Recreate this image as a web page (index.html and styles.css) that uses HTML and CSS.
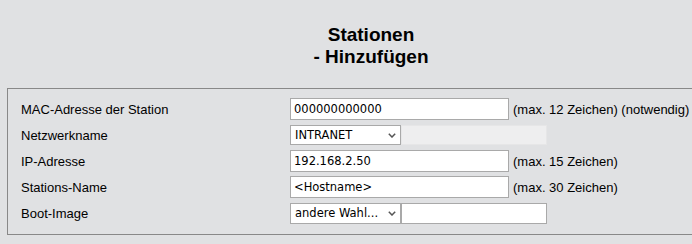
FILE: index.html
```html
<!DOCTYPE html>
<html lang="de">
<head>
<meta charset="utf-8">
<title>Stationen - Hinzufügen</title>
<link rel="stylesheet" href="styles.css">
</head>
<body>
<div class="page">
  <h1 class="title">Stationen<br>- Hinzufügen</h1>
  <div class="panel">
    <div class="row">
      <div class="label">MAC-Adresse der Station</div>
      <div class="field">
        <input class="text" type="text" value="000000000000">
        <span class="hint">(max. 12 Zeichen) (notwendig)</span>
      </div>
    </div>
    <div class="row">
      <div class="label">Netzwerkname</div>
      <div class="field">
        <span class="selectwrap">
          <select class="select"><option>INTRANET</option></select>
          <svg class="chev" width="8" height="5" viewBox="0 0 8 5"><path d="M0.8 0.8 L4 4 L7.2 0.8" fill="none" stroke="#555" stroke-width="1.5"/></svg>
        </span>
        <input class="side disabled" type="text" disabled>
      </div>
    </div>
    <div class="row">
      <div class="label">IP-Adresse</div>
      <div class="field">
        <input class="text" type="text" value="192.168.2.50">
        <span class="hint">(max. 15 Zeichen)</span>
      </div>
    </div>
    <div class="row">
      <div class="label">Stations-Name</div>
      <div class="field">
        <input class="text" type="text" value="&lt;Hostname&gt;">
        <span class="hint">(max. 30 Zeichen)</span>
      </div>
    </div>
    <div class="row">
      <div class="label">Boot-Image</div>
      <div class="field">
        <span class="selectwrap">
          <select class="select tall"><option>andere Wahl...</option></select>
          <svg class="chev" width="8" height="5" viewBox="0 0 8 5"><path d="M0.8 0.8 L4 4 L7.2 0.8" fill="none" stroke="#555" stroke-width="1.5"/></svg>
        </span>
        <input class="side tall" type="text">
      </div>
    </div>
  </div>
</div>
</body>
</html>
```
FILE: styles.css
```css
html, body {
  margin: 0;
  padding: 0;
  overflow: hidden;
  background: #e0e1e3;
  color: #000;
}

.page {
  padding: 24px 0 0 7px;
  width: 728px;
}

.title {
  margin: 0 0 20px;
  text-align: center;
  font: bold 19px/22px "Liberation Sans", Arial, sans-serif;
}

.panel {
  box-sizing: border-box;
  width: 728px;
  border: 1px solid #888;
  padding: 7px 0 8px 13px;
  font: 13px/15px "Liberation Sans", Arial, sans-serif;
}

.row {
  display: flex;
  align-items: center;
  height: 26px;
}

.label {
  width: 269px;
  flex: none;
}

.field {
  display: flex;
  align-items: center;
}

.text, .select, .side {
  box-sizing: border-box;
  margin: 0;
  border: 1px solid #a9a9a9;
  background: #fff;
  color: #000;
  font: 11.5px "DejaVu Sans", Verdana, sans-serif;
  outline: none;
}

.text {
  width: 219px;
  height: 22px;
  padding: 0 3px;
}

.hint {
  margin-left: 4px;
}

.selectwrap {
  position: relative;
  display: block;
}

.select {
  -webkit-appearance: none;
  appearance: none;
  display: block;
  width: 111px;
  height: 20px;
  padding: 0 4px 0 4px;
  border-radius: 0;
  text-overflow: clip;
}

.chev {
  position: absolute;
  right: 5px;
  top: 8px;
}

.select.tall {
  height: 21px;
}

.side {
  width: 146px;
  height: 20px;
  padding: 0 3px;
}

.side.tall {
  height: 21px;
}

.disabled {
  background: #eeeeef;
  border-color: #e6e6e7;
}
```
